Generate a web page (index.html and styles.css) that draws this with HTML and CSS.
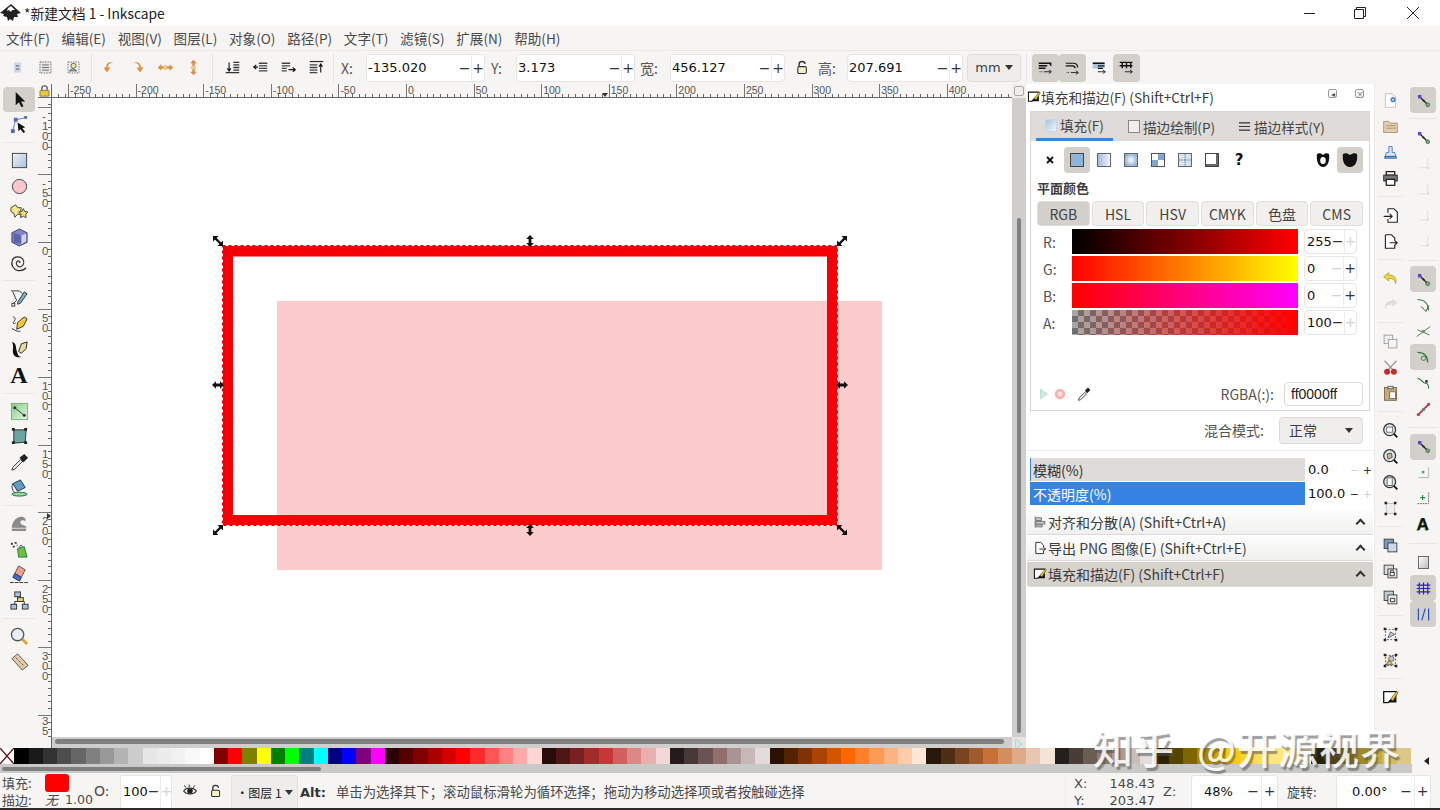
FILE: index.html
```html
<!DOCTYPE html>
<html lang="zh-CN">
<head>
    <meta charset="UTF-8">
    <title>*新建文档 1 - Inkscape</title>
    <link rel="stylesheet" href="styles.css">
</head>
<body>
<!-- icon sheet -->
<svg class="sheet" xmlns="http://www.w3.org/2000/svg">
    <defs>
        <linearGradient id="gBlue" x1="0" y1="0" x2="1" y2="1"><stop offset="0" stop-color="#eef2f8"/><stop offset="1" stop-color="#a9c0de"/></linearGradient>
        <linearGradient id="gGreen" x1="0" y1="0" x2="1" y2="1"><stop offset="0" stop-color="#86cc86"/><stop offset="1" stop-color="#e6f3e2"/></linearGradient>
        <linearGradient id="gPaper" x1="0" y1="0" x2="1" y2="1"><stop offset="0" stop-color="#fff"/><stop offset="1" stop-color="#bbb"/></linearGradient>
    </defs>
    <symbol id="t-select" viewBox="0 0 20 20"><path d="M6 2v14l3.400-3.200 2.600 5.400 2.200-1-2.600-5.200H16z" fill="#111"/></symbol>
    <symbol id="t-node" viewBox="0 0 20 20"><path d="M6 5l10-2M6 5L3 16" stroke="#6a78c0" fill="none"/><path d="M8 8l8 5-3 1 3 4-2 1-3-4-2 2z" fill="#111"/><path d="M4 3h4v4H4zM15 1h3v3h-3zM1 15h4v4H1z" fill="#5566c0"/></symbol>
    <symbol id="t-rect" viewBox="0 0 20 20"><rect x="2.500" y="2.500" width="15" height="15" fill="url(#gBlue)" stroke="#444"/></symbol>
    <symbol id="t-ellipse" viewBox="0 0 20 20"><circle cx="10" cy="10" r="7.500" fill="#f9c6cb" stroke="#444"/></symbol>
    <symbol id="t-star" viewBox="0 0 20 20"><path d="M1 6l5-3 2 3 4 0-1 4 1 3-4 0-3 3-1-4-3-2z" fill="#f5e58e" stroke="#444"/><path d="M14 7l1.500 3 3.500.5-2.500 2.500.5 3.500-3-1.500-3 1.500.5-3.500-2.500-2.500 3.500-.5z" fill="#f2dc6a" stroke="#444"/></symbol>
    <symbol id="t-3d" viewBox="0 0 20 20"><path d="M10 1l8 4v10l-8 4-8-4V5z" fill="#8087c9" stroke="#445"/><path d="M4 5l8 3v8l-8 0z" fill="#5d64ad"/><path d="M12 8l5-2v8l-5 3z" fill="#d2d4ee"/></symbol>
    <symbol id="t-spiral" viewBox="0 0 20 20"><path d="M10 10.500c1.500-1.500-1-3-2.500-1.500-2 2 0 6 3 5.500 4-.5 5-5 3-8-3-3.500-9-3-11 1-2 5 1 10 6 11 4 .5 7-1 8.500-3" fill="none" stroke="#333" stroke-width="1.300"/></symbol>
    <symbol id="t-pencil" viewBox="0 0 20 20"><path d="M1 2h9l3 3M3 3l4 9-4 4" fill="none" stroke="#333"/><path d="M8 14l7-11 3 2-7 10-3 1z" fill="#7ab8b8" stroke="#334"/><rect x="2" y="15" width="3" height="3" fill="#fff" stroke="#333"/></symbol>
    <symbol id="t-pen" viewBox="0 0 20 20"><path d="M3 2c3 0 3 3 1 5s1 3 2 1M2 14c3 2 6 4 9 3" fill="none" stroke="#333"/><path d="M7 15l1-7 7-6 3 2-4 8z" fill="#f2c83a" stroke="#333"/></symbol>
    <symbol id="t-callig" viewBox="0 0 20 20"><path d="M2 2c5 1 4 6 5 9s1 6 5 7c-6 1-9-2-9-6s1-6-1-10z" fill="#111"/><path d="M9 12l3-8 6-2-1 7-5 5z" fill="#e8dc9a" stroke="#222"/></symbol>
    <symbol id="t-gradient" viewBox="0 0 20 20"><rect x="1.500" y="1.500" width="17" height="17" fill="url(#gGreen)" stroke="#7cb07c"/><path d="M5 6l10 8" stroke="#333"/><circle cx="5" cy="6" r="1.600" fill="#333"/><circle cx="15" cy="14" r="1.600" fill="#333"/></symbol>
    <symbol id="t-mesh" viewBox="0 0 20 20"><path d="M4 3l13 0 -1 13-12 1z" fill="#6aa5a0" stroke="#333"/><path d="M2 1h3v3H2zM15 1h3v3h-3zM15 15h3v3h-3zM2 15h3v3H2z" fill="#222"/></symbol>
    <symbol id="t-dropper" viewBox="0 0 20 20"><path d="M3 15l8-8 2 2-8 8-3 1z" fill="#eee" stroke="#333"/><path d="M10 5l5-4 4 4-5 5z" fill="#222"/></symbol>
    <symbol id="t-bucket" viewBox="0 0 20 20"><path d="M3 6l8-4 5 8-8 4z" fill="#5f9fc4" stroke="#234"/><path d="M3 6c-2 4 0 8 3 10" fill="none" stroke="#234"/><ellipse cx="10" cy="17" rx="8" ry="2" fill="#9dd49d" stroke="#264"/></symbol>
    <symbol id="t-tweak" viewBox="0 0 20 20"><path d="M2 13c1-6 6-11 11-10 3 .5 4 3 3 5-1-2-4-2-5 0s2 4 6 5v5H2z" fill="#8b8b8b"/><path d="M2 15h15" stroke="#ddd"/></symbol>
    <symbol id="t-spray" viewBox="0 0 20 20"><path d="M8 9l7-2 3 11-9 0z" fill="#6fbf3f" stroke="#274"/><path d="M10 8c0-3 3-3 3-1" fill="none" stroke="#333"/><path d="M1 3h2v2H1zM5 2h2v2H5zM3 6h2v2H3zM7 5h1v1H7z" fill="#333"/></symbol>
    <symbol id="t-eraser" viewBox="0 0 20 20"><path d="M9 1l7 4-4 8-7-4z" fill="#f0a090" stroke="#555"/><path d="M5 9l7 4-2 4-7-4z" fill="#4a68c8" stroke="#334"/><path d="M0 18.500h20" stroke="#333" stroke-dasharray="4 1"/></symbol>
    <symbol id="t-connector" viewBox="0 0 20 20"><path d="M8 4v5M5 14v-3h10v3" fill="none" stroke="#333"/><rect x="5" y="1" width="6" height="5" fill="#a9c4e0" stroke="#333"/><rect x="8" y="7" width="6" height="4" fill="#f0d860" stroke="#333"/><rect x="1" y="14" width="6" height="5" fill="#a9c4e0" stroke="#333"/><rect x="13" y="14" width="6" height="5" fill="#a9c4e0" stroke="#333"/></symbol>
    <symbol id="t-zoom" viewBox="0 0 20 20"><circle cx="8" cy="8" r="6.500" fill="#e8eef5" stroke="#555" stroke-width="1.400"/><path d="M13 13l5 5" stroke="#d8a830" stroke-width="3"/></symbol>
    <symbol id="t-measure" viewBox="0 0 20 20"><path d="M2 7l6-5 11 12-6 5z" fill="#e8c8a8" stroke="#555"/><path d="M6 6l2 2M9 9l2 2M12 12l2 2" stroke="#555"/></symbol>

    <symbol id="b-layer" viewBox="0 0 20 20"><rect x="6" y="4" width="8" height="12" fill="#cfd8e4"/><path d="M8 7h4v2H8zM8 11h4v2H8z" fill="#7f93ad"/></symbol>
    <symbol id="b-all" viewBox="0 0 20 20"><rect x="3.500" y="3.500" width="13" height="13" fill="#e8e8e8" stroke="#444" stroke-dasharray="1.500 1.500"/><path d="M6 7h8M6 10h8M6 13h8" stroke="#555"/></symbol>
    <symbol id="b-touch" viewBox="0 0 20 20"><rect x="3.500" y="3.500" width="13" height="13" fill="#eee" stroke="#555" stroke-dasharray="1.500 1.500"/><circle cx="10" cy="8" r="3" fill="#e8e6a0" stroke="#555"/><path d="M5 14l4-3 5 3z" fill="#9cc0d8" stroke="#555"/></symbol>
    <symbol id="b-ccw" viewBox="0 0 20 20"><path d="M15 5c-5-1-7 2-7 5h3l-4 6-4-6h3c0-5 4-8 9-5z" fill="#dc9040"/></symbol>
    <symbol id="b-cw" viewBox="0 0 20 20"><path d="M5 5c5-1 7 2 7 5H9l4 6 4-6h-3c0-5-4-8-9-5z" fill="#dc9040"/></symbol>
    <symbol id="b-fliph" viewBox="0 0 20 20"><path d="M1 10l4-4v2.500h10V6l4 4-4 4v-2.500H5V14z" fill="#dc9040"/><rect x="8" y="7" width="4" height="6" fill="#f0c890"/></symbol>
    <symbol id="b-flipv" viewBox="0 0 20 20"><path d="M10 1l4 4h-2.500v10H14l-4 4-4-4h2.500V5H6z" fill="#dc9040"/><rect x="7" y="8" width="6" height="4" fill="#f0c890"/></symbol>
    <symbol id="b-top" viewBox="0 0 20 20"><path d="M11 4h7M11 7h7M11 10h7M11 13h7" stroke="#333" stroke-width="1.500"/><path d="M2 16h16" stroke="#333" stroke-width="1.500"/><path d="M6 4v9M4 11l2 3 2-3" fill="none" stroke="#111" stroke-width="1.300"/></symbol>
    <symbol id="b-raise" viewBox="0 0 20 20"><path d="M8 5h10M8 8h10M8 11h10M8 14h10" stroke="#444" stroke-width="1.500"/><path d="M7 9.500H2M5 7L2 9.500 5 12" fill="none" stroke="#111" stroke-width="1.300"/></symbol>
    <symbol id="b-lower" viewBox="0 0 20 20"><path d="M2 5h10M2 8h10M2 11h6M2 14h6" stroke="#444" stroke-width="1.500"/><path d="M10 12.500h8M15 10l3 2.500-3 2.500" fill="none" stroke="#111" stroke-width="1.300"/></symbol>
    <symbol id="b-bottom" viewBox="0 0 20 20"><path d="M2 3h16" stroke="#333" stroke-width="1.500"/><path d="M2 7h9M2 10h9M2 13h9M2 16h9" stroke="#444" stroke-width="1.500"/><path d="M15 16V7M13 9l2-3 2 3" fill="none" stroke="#111" stroke-width="1.300"/></symbol>
    <symbol id="b-scale" viewBox="0 0 20 20"><path d="M2 5h14v3M2 8h10M2 11h8" fill="none" stroke="#111" stroke-width="1.800"/><path d="M8 15h8M14 13l3 2-3 2" fill="none" stroke="#111"/><path d="M3 15h3" stroke="#111" stroke-dasharray="1 1"/></symbol>
    <symbol id="b-corner" viewBox="0 0 20 20"><path d="M2 5h9c4 0 5 2 5 5M2 8h8c2 0 3 1 3 3" fill="none" stroke="#111" stroke-width="1.400"/><path d="M8 16h8M14 14l3 2-3 2" fill="none" stroke="#111"/><path d="M3 16h3" stroke="#111" stroke-dasharray="1 1"/></symbol>
    <symbol id="b-grad" viewBox="0 0 20 20"><path d="M2 4h14v7H2z" fill="#aac4dc"/><path d="M2 5h14M8 8h8M8 11h6" stroke="#111" stroke-width="1.500"/><path d="M8 15h8M14 13l3 2-3 2" fill="none" stroke="#111"/></symbol>
    <symbol id="b-pat" viewBox="0 0 20 20"><path d="M2 4h15M2 8h15" stroke="#111" stroke-width="1.600"/><path d="M5 4v7M10 4v7M15 4v7" stroke="#111" stroke-width="1.600"/><path d="M8 15h8M14 13l3 2-3 2" fill="none" stroke="#111"/></symbol>
    <symbol id="i-lock" viewBox="0 0 20 20"><path d="M6 9V6c0-4 7-4 7 0" fill="none" stroke="#333" stroke-width="1.600"/><rect x="4.500" y="9" width="10" height="8" rx="1.500" fill="#f5efc8" stroke="#333" stroke-width="1.300"/></symbol>
    <symbol id="i-locked" viewBox="0 0 20 20"><path d="M6 9V5c0-4 8-4 8 0v4" fill="none" stroke="#555" stroke-width="2"/><rect x="3" y="9" width="14" height="9" rx="1" fill="#e8c838" stroke="#554"/></symbol>
    <symbol id="i-eye" viewBox="0 0 20 20"><path d="M2 10c4-5 12-5 16 0-4 5-12 5-16 0z" fill="#fff" stroke="#222" stroke-width="1.300"/><circle cx="10" cy="10" r="3.500" fill="#222"/><path d="M5 6L3 3M9 5V2M14 6l2-3" stroke="#222" stroke-width="1.200"/></symbol>

    <symbol id="p-none" viewBox="0 0 20 20"><path d="M7 7l6 6M13 7l-6 6" stroke="#111" stroke-width="1.800"/></symbol>
    <symbol id="p-flat" viewBox="0 0 20 20"><rect x="3.500" y="3.500" width="13" height="13" fill="#8db4da" stroke="#444"/></symbol>
    <symbol id="p-linear" viewBox="0 0 20 20"><defs><linearGradient id="gL"><stop offset="0" stop-color="#9fb9dc"/><stop offset="1" stop-color="#f4f6fa"/></linearGradient></defs><rect x="3.500" y="3.500" width="13" height="13" fill="url(#gL)" stroke="#666"/></symbol>
    <symbol id="p-radial" viewBox="0 0 20 20"><defs><radialGradient id="gR"><stop offset="0" stop-color="#fff"/><stop offset="1" stop-color="#90b0d8"/></radialGradient></defs><rect x="3.500" y="3.500" width="13" height="13" fill="url(#gR)" stroke="#666"/></symbol>
    <symbol id="p-pattern" viewBox="0 0 20 20"><rect x="3.500" y="3.500" width="13" height="13" fill="#fff" stroke="#555"/><path d="M10 4h6v6h-6zM4 10h6v6H4z" fill="#7fa6cf"/><path d="M4 4h6v6H4z" fill="#fff"/></symbol>
    <symbol id="p-mesh" viewBox="0 0 20 20"><rect x="3.500" y="3.500" width="13" height="13" fill="#d5e2ef" stroke="#666"/><path d="M10 4v12M4 10h12" stroke="#777" stroke-dasharray="1.500 1"/></symbol>
    <symbol id="p-swatch" viewBox="0 0 20 20"><rect x="3.500" y="3.500" width="13" height="13" fill="#fff" stroke="#444"/><path d="M14 4h2v12H4v-2h10z" fill="#666"/></symbol>
    <symbol id="p-odd" viewBox="0 0 20 20"><path d="M4 4c2-1 4-1 6 1 2-2 4-2 6-1 1 6-1 13-6 13S3 10 4 4z" fill="#111"/><ellipse cx="10" cy="10.500" rx="2.800" ry="3.500" fill="#fff"/></symbol>
    <symbol id="p-nonzero" viewBox="0 0 20 20"><path d="M3 4c2-1 4-1 7 1 3-2 5-2 7-1 1 6-1 13-7 13S2 10 3 4z" fill="#111"/></symbol>
    <symbol id="p-play" viewBox="0 0 20 20"><path d="M5 3l10 7-10 7z" fill="#cfe9e6" stroke="#a8d4c4"/></symbol>
    <symbol id="p-stop" viewBox="0 0 20 20"><circle cx="10" cy="10" r="7.500" fill="#f4b4b4"/><circle cx="10" cy="10" r="3.500" fill="#fbdcdc"/></symbol>
    <symbol id="p-dropper" viewBox="0 0 20 20"><path d="M4 15l7-7 2 2-7 7-3 1z" fill="#fff" stroke="#222"/><path d="M11 6l4-4 3 3-4 4z" fill="#222"/></symbol>
    <symbol id="d-fill" viewBox="0 0 20 20"><path d="M2 3h15v3L7 16H2z" fill="#fff" stroke="#111" stroke-width="1.500"/><path d="M7 16L17 6v10z" fill="#111"/><path d="M10 12l7-9 2 1-6 10z" fill="#e8c030" stroke="#333" stroke-width=".6"/></symbol>
    <symbol id="d-align" viewBox="0 0 20 20"><path d="M3 2v16" stroke="#666"/><rect x="4" y="4" width="8" height="4" fill="#c8c8c8" stroke="#555"/><rect x="4" y="9" width="13" height="4" fill="#c8c8c8" stroke="#555"/><rect x="4" y="14" width="9" height="3" fill="#c8c8c8" stroke="#555"/></symbol>
    <symbol id="d-export" viewBox="0 0 20 20"><path d="M4 2h7l4 4v3M15 14v4H4V2" fill="#fff" stroke="#222" stroke-width="1.300"/><path d="M9 11.500h9M15 9l3 2.500-3 2.500" fill="none" stroke="#222" stroke-width="1.300"/></symbol>
    <symbol id="d-import" viewBox="0 0 20 20"><path d="M7 7V2h7l4 4v12H7v-4" fill="#fff" stroke="#222" stroke-width="1.300"/><path d="M2 11h10M9 8l3 3-3 3" fill="none" stroke="#222" stroke-width="1.300"/></symbol>

    <symbol id="c-new" viewBox="0 0 20 20"><path d="M4 2h8l4 4v12H4z" fill="#fff" stroke="#bbb"/><circle cx="13" cy="9" r="3" fill="#4a86c8"/><circle cx="13" cy="9" r="1" fill="#fff"/></symbol>
    <symbol id="c-open" viewBox="0 0 20 20"><path d="M2 4h6l2 2h8v11H2z" fill="#e3cfae" stroke="#a08a70"/><path d="M5 9h11M5 12h11" stroke="#a08a70"/></symbol>
    <symbol id="c-save" viewBox="0 0 20 20"><path d="M8 3h4v7h3l2 7H3l2-7h3z" fill="#d4e2f2" stroke="#4a78b0"/><path d="M3 15h14" stroke="#3a6aa8" stroke-width="2"/></symbol>
    <symbol id="c-print" viewBox="0 0 20 20"><path d="M5 2h10v4H5z" fill="#fff" stroke="#222" stroke-width="1.500"/><rect x="2" y="6" width="16" height="7" fill="#777" stroke="#222"/><rect x="5" y="11" width="10" height="7" fill="#fff" stroke="#222" stroke-width="1.500"/></symbol>
    <symbol id="c-undo" viewBox="0 0 20 20"><path d="M8 3L2 8l6 5v-3c4 0 7 1 8 6 2-7-2-10-8-10z" fill="#ecd44c" stroke="#a89020" stroke-width=".8"/></symbol>
    <symbol id="c-redo" viewBox="0 0 20 20"><path d="M12 3l6 5-6 5v-3c-4 0-7 1-8 6-2-7 2-10 8-10z" fill="#ddd"/></symbol>
    <symbol id="c-dup" viewBox="0 0 20 20"><rect x="2.500" y="2.500" width="10" height="10" fill="#f0f0f0" stroke="#999"/><rect x="7.500" y="7.500" width="10" height="10" fill="#f4f4f4" stroke="#999"/></symbol>
    <symbol id="c-cut" viewBox="0 0 20 20"><path d="M3 2l10 11M17 2L7 13" stroke="#999" stroke-width="1.500"/><circle cx="6" cy="15" r="3.500" fill="#c82828"/><circle cx="14" cy="15" r="3.500" fill="#c82828"/></symbol>
    <symbol id="c-paste" viewBox="0 0 20 20"><rect x="3" y="3" width="14" height="15" fill="#c8a878" stroke="#7a6040"/><rect x="7" y="1.500" width="6" height="3" fill="#ddd" stroke="#555"/><rect x="9" y="8" width="7" height="8" fill="#fff" stroke="#666"/></symbol>
    <symbol id="z-sel" viewBox="0 0 20 20"><circle cx="9" cy="9" r="7" fill="#dfe6ea" stroke="#333" stroke-width="1.500"/><rect x="5.500" y="6" width="7" height="6" fill="#fff" stroke="#666"/><path d="M14 14l4 4" stroke="#111" stroke-width="2.200"/></symbol>
    <symbol id="z-draw" viewBox="0 0 20 20"><circle cx="9" cy="9" r="7" fill="#dfe6ea" stroke="#333" stroke-width="1.500"/><path d="M6 7l5-1 1 5-5 2z" fill="#c8b890" stroke="#444"/><path d="M14 14l4 4" stroke="#111" stroke-width="2.200"/></symbol>
    <symbol id="z-page" viewBox="0 0 20 20"><circle cx="9" cy="9" r="7" fill="#dfe6ea" stroke="#333" stroke-width="1.500"/><rect x="6" y="4.500" width="6" height="9" fill="#fff" stroke="#555"/><path d="M14 14l4 4" stroke="#111" stroke-width="2.200"/></symbol>
    <symbol id="z-fit" viewBox="0 0 20 20"><rect x="5" y="4" width="10" height="12" fill="#eee" stroke="#bbb"/><path d="M3 2h3v3H3zM14 2h3v3h-3zM3 15h3v3H3zM14 15h3v3h-3z" fill="#222"/></symbol>
    <symbol id="o-clone" viewBox="0 0 20 20"><rect x="2.500" y="2.500" width="11" height="11" fill="#7a9cc4" stroke="#333"/><rect x="7" y="7" width="10.500" height="10.500" fill="#c9daee" stroke="#333"/></symbol>
    <symbol id="o-group" viewBox="0 0 20 20"><rect x="2.500" y="2.500" width="11" height="11" fill="#ddd" stroke="#333"/><rect x="7" y="7" width="10.500" height="10.500" fill="#eee" stroke="#333"/><path d="M10 11V9.500c0-2 3.500-2 3.500 0V11M9.500 11h5v4h-5z" fill="none" stroke="#222"/></symbol>
    <symbol id="o-ungroup" viewBox="0 0 20 20"><rect x="2.500" y="2.500" width="11" height="11" fill="#bcc" stroke="#333"/><rect x="7" y="7" width="10.500" height="10.500" fill="#eee" stroke="#333"/><path d="M10 15v-4h5v4z" fill="none" stroke="#222"/></symbol>
    <symbol id="o-g1" viewBox="0 0 20 20"><rect x="4" y="4" width="12" height="12" fill="none" stroke="#444" stroke-dasharray="2 2"/><path d="M7 14l3-7 5 3z" fill="#bcd" stroke="#555"/><path d="M2 2h3v3H2zM15 2h3v3h-3zM2 15h3v3H2zM15 15h3v3h-3z" fill="#222"/></symbol>
    <symbol id="o-g2" viewBox="0 0 20 20"><rect x="4" y="4" width="12" height="12" fill="#f0e8c8" stroke="#444" stroke-dasharray="2 2"/><circle cx="11" cy="8" r="3" fill="#bcd" stroke="#555"/><path d="M5 15l3-5 5 5z" fill="#e0c860" stroke="#555"/><path d="M2 2h3v3H2zM15 2h3v3h-3zM2 15h3v3H2zM15 15h3v3h-3z" fill="#222"/></symbol>

    <symbol id="s-node" viewBox="0 0 20 20"><path d="M5 5l10 10" stroke="#222" stroke-width="1.400"/><rect x="3.500" y="3.500" width="4" height="4" fill="#5a48c0"/><circle cx="15" cy="15" r="2.300" fill="#6ab46a" stroke="#333" stroke-width=".6"/><circle cx="10" cy="10" r="1.300" fill="#222"/></symbol>
    <symbol id="s-corner" viewBox="0 0 20 20"><path d="M15 4v11H5" fill="none" stroke="#ddd"/><circle cx="15" cy="15" r="1.500" fill="#ddd"/></symbol>
    <symbol id="s-path" viewBox="0 0 20 20"><path d="M3 3c8 0 13 5 13 13" fill="none" stroke="#2a8a3a" stroke-width="1.300"/><path d="M7 11l6 6 3-7" fill="none" stroke="#333"/></symbol>
    <symbol id="s-cross" viewBox="0 0 20 20"><path d="M2 16L18 4M3 8l14 6" stroke="#555"/><circle cx="10" cy="10" r="2" fill="#6a9a6a"/></symbol>
    <symbol id="s-smooth" viewBox="0 0 20 20"><path d="M3 4c8 0 12 4 12 12" fill="none" stroke="#2a7a3a" stroke-width="1.300"/><circle cx="10" cy="11" r="2.500" fill="none" stroke="#2a7a3a"/></symbol>
    <symbol id="s-mid" viewBox="0 0 20 20"><path d="M3 4c5 0 5 6 10 6 2 0 3 3 3 6" fill="none" stroke="#2a7a3a" stroke-width="1.300"/><path d="M12 6h3v3h-3z" fill="#333"/></symbol>
    <symbol id="s-red" viewBox="0 0 20 20"><path d="M4 16L16 4" stroke="#b03030" stroke-width="2"/><circle cx="4" cy="16" r="2" fill="#c04848"/><circle cx="10" cy="10" r="2" fill="#708070"/><circle cx="16" cy="4" r="2" fill="#c04848"/></symbol>
    <symbol id="s-center" viewBox="0 0 20 20"><path d="M16 4v12H4" fill="none" stroke="#aaa"/><rect x="8" y="8" width="3" height="3" fill="#5aa070"/></symbol>
    <symbol id="s-plus" viewBox="0 0 20 20"><path d="M16 3v13H3" fill="none" stroke="#555" stroke-dasharray="2 1"/><path d="M6 9h6M9 6v6" stroke="#2a8a3a" stroke-width="1.300"/></symbol>
    <symbol id="s-page" viewBox="0 0 20 20"><rect x="4" y="3" width="12" height="14" fill="url(#gPaper)" stroke="#555"/></symbol>
    <symbol id="s-grid" viewBox="0 0 20 20"><path d="M2 6h16M2 10h16M2 14h16M5 3v14M10 3v14M15 3v14" stroke="#2a20c0" stroke-width="1.300"/></symbol>
    <symbol id="s-guide" viewBox="0 0 20 20"><path d="M4 3v14M16 3v14M8 17l4-14" stroke="#2a50c0" stroke-width="1.400"/></symbol>
</svg>

<div class="titlebar">
    <svg class="logo" viewBox="0 0 22 20"><path d="M11 1l10 9-4 1 1 3-4 0-1 4-3-2-2 2-1-4-4-1 1-2-4-1z" fill="#222"/><path d="M8 5l3-2 4 4-3 0-1 2-2-2-2 1z" fill="#fff"/></svg>
    <span class="title">*新建文档 1 - Inkscape</span>
    <div class="winctl">
        <svg viewBox="0 0 14 14"><path d="M1 7.500h11" stroke="#222" fill="none"/></svg>
        <svg viewBox="0 0 14 14"><path d="M1.500 3.500h9v9h-9zM3.500 3.500v-2h9v9h-2" stroke="#222" fill="none"/></svg>
        <svg class="win-close" viewBox="0 0 14 14"><path d="M1 1l12 12M13 1L1 13" stroke="#222" fill="none"/></svg>
    </div>
</div>

<div class="menubar">
    <span>文件(F)</span><span>编辑(E)</span><span>视图(V)</span><span>图层(L)</span><span>对象(O)</span><span>路径(P)</span><span>文字(T)</span><span>滤镜(S)</span><span>扩展(N)</span><span>帮助(H)</span>
</div>

<div class="toolbar">
    <span class="tb"><svg class="ic"><use href="#b-layer"/></svg></span>
    <span class="tb"><svg class="ic"><use href="#b-all"/></svg></span>
    <span class="tb"><svg class="ic"><use href="#b-touch"/></svg></span>
    <i class="vsep sep-a"></i>
    <span class="tb"><svg class="ic"><use href="#b-ccw"/></svg></span>
    <span class="tb"><svg class="ic"><use href="#b-cw"/></svg></span>
    <span class="tb"><svg class="ic"><use href="#b-fliph"/></svg></span>
    <span class="tb"><svg class="ic"><use href="#b-flipv"/></svg></span>
    <i class="vsep sep-b"></i>
    <span class="tb"><svg class="ic"><use href="#b-top"/></svg></span>
    <span class="tb"><svg class="ic"><use href="#b-raise"/></svg></span>
    <span class="tb"><svg class="ic"><use href="#b-lower"/></svg></span>
    <span class="tb"><svg class="ic"><use href="#b-bottom"/></svg></span>
    <i class="vsep sep-d"></i>
    <label class="coord coord-x">X:</label>
    <div class="spin w-119"><span class="val">-135.020</span><b>−</b><b>+</b></div>
    <label class="coord coord-y">Y:</label>
    <div class="spin w-119"><span class="val">3.173</span><b>−</b><b>+</b></div>
    <label class="coord coord-w">宽:</label>
    <div class="spin w-115"><span class="val">456.127</span><b>−</b><b>+</b></div>
    <span class="tb tb-lock"><svg class="ic"><use href="#i-lock"/></svg></span>
    <label class="coord coord-h">高:</label>
    <div class="spin w-116"><span class="val">207.691</span><b>−</b><b>+</b></div>
    <div class="unit">mm<i class="caret"></i></div>
    <i class="vsep sep-c"></i>
    <span class="tb tb-snap on"><svg class="ic"><use href="#b-scale"/></svg></span>
    <span class="tb tb-snap on"><svg class="ic"><use href="#b-corner"/></svg></span>
    <span class="tb tb-snap"><svg class="ic"><use href="#b-grad"/></svg></span>
    <span class="tb tb-snap on"><svg class="ic"><use href="#b-pat"/></svg></span>
</div>

<div class="workspace">
    <div class="toolbox">
        <span class="tool on"><svg class="ic"><use href="#t-select"/></svg></span>
        <span class="tool"><svg class="ic"><use href="#t-node"/></svg></span>
        <hr>
        <span class="tool"><svg class="ic"><use href="#t-rect"/></svg></span>
        <span class="tool"><svg class="ic"><use href="#t-ellipse"/></svg></span>
        <span class="tool"><svg class="ic"><use href="#t-star"/></svg></span>
        <span class="tool"><svg class="ic"><use href="#t-3d"/></svg></span>
        <span class="tool"><svg class="ic"><use href="#t-spiral"/></svg></span>
        <hr>
        <span class="tool"><svg class="ic"><use href="#t-pencil"/></svg></span>
        <span class="tool"><svg class="ic"><use href="#t-pen"/></svg></span>
        <span class="tool"><svg class="ic"><use href="#t-callig"/></svg></span>
        <span class="tool tool-text">A</span>
        <hr>
        <span class="tool"><svg class="ic"><use href="#t-gradient"/></svg></span>
        <span class="tool"><svg class="ic"><use href="#t-mesh"/></svg></span>
        <span class="tool"><svg class="ic"><use href="#t-dropper"/></svg></span>
        <span class="tool"><svg class="ic"><use href="#t-bucket"/></svg></span>
        <hr>
        <span class="tool"><svg class="ic"><use href="#t-tweak"/></svg></span>
        <span class="tool"><svg class="ic"><use href="#t-spray"/></svg></span>
        <span class="tool"><svg class="ic"><use href="#t-eraser"/></svg></span>
        <span class="tool"><svg class="ic"><use href="#t-connector"/></svg></span>
        <hr>
        <span class="tool"><svg class="ic"><use href="#t-zoom"/></svg></span>
        <span class="tool"><svg class="ic"><use href="#t-measure"/></svg></span>
    </div>

    <div class="canvas-area">
        <div class="ruler-corner"><svg class="ic-sm"><use href="#i-locked"/></svg></div>
        <div class="hruler">
            <div class="hcell hcell-first"></div>
            <div class="hcell"><span>-250</span></div>
            <div class="hcell"><span>-200</span></div>
            <div class="hcell"><span>-150</span></div>
            <div class="hcell"><span>-100</span></div>
            <div class="hcell"><span>-50</span></div>
            <div class="hcell"><span>0</span></div>
            <div class="hcell"><span>50</span></div>
            <div class="hcell"><span>100</span></div>
            <div class="hcell"><span>150</span></div>
            <div class="hcell"><span>200</span></div>
            <div class="hcell"><span>250</span></div>
            <div class="hcell"><span>300</span></div>
            <div class="hcell"><span>350</span></div>
            <div class="hcell"><span>400</span></div>
            <i class="ruler-mark-h"></i>
        </div>
        <div class="cms-btn"><i></i></div>
        <div class="vruler">
            <div class="vcell vcell-first"></div>
            <div class="vcell"><span>-100</span></div>
            <div class="vcell"><span>-50</span></div>
            <div class="vcell"><span>0</span></div>
            <div class="vcell"><span>50</span></div>
            <div class="vcell"><span>100</span></div>
            <div class="vcell"><span>150</span></div>
            <div class="vcell"><span>200</span></div>
            <div class="vcell"><span>250</span></div>
            <div class="vcell"><span>300</span></div>
            <div class="vcell vcell-last"><span>35</span></div>
            <i class="ruler-mark-v"></i>
        </div>
        <div class="canvas">
            <svg viewBox="52 98 960 639" width="960" height="639">
                <defs>
                    <g id="h-diag"><path d="M-3-3L3 3" stroke="#111" stroke-width="2.400"/><path d="M-5-5h5.500L-5 .5zM5 5h-5.500L5-.5z" fill="#111"/></g>
                    <path id="h-vert" d="M0-6L3.800-2H1.400v4h2.400L0 6l-3.800-4h2.400v-4h-2.400z" fill="#111"/>
                </defs>
                <rect x="277" y="301" width="605" height="269" fill="#fccbcb"/>
                <rect x="227.500" y="251" width="605" height="269.500" fill="none" stroke="#f70008" stroke-width="11"/>
                <rect x="222.500" y="245.500" width="615" height="280" fill="none" stroke="#fff" stroke-width="1"/>
                <rect x="222.500" y="245.500" width="615" height="280" fill="none" stroke="#d00" stroke-width="1" stroke-dasharray="3 3"/>
                <use href="#h-diag" x="218" y="241"/>
                <use href="#h-diag" x="842" y="530"/>
                <use href="#h-diag" transform="translate(842 241) rotate(90)"/>
                <use href="#h-diag" transform="translate(218 530) rotate(90)"/>
                <use href="#h-vert" x="530" y="241"/>
                <use href="#h-vert" x="530" y="530"/>
                <use href="#h-vert" transform="translate(218 385) rotate(90)"/>
                <use href="#h-vert" transform="translate(842 385) rotate(90)"/>
            </svg>
        </div>
        <div class="vscroll"><i></i></div>
        <div class="hscroll-spacer"></div>
        <div class="hscroll"><i></i></div>
        <div class="scroll-corner"><svg class="ic-sm"><use href="#p-play"/></svg></div>
    </div>

    <div class="dock">
        <div class="dock-head">
            <svg class="ic-dock"><use href="#d-fill"/></svg>
            <span>填充和描边(F) (Shift+Ctrl+F)</span>
            <i class="dock-btn dock-btn-a">◂</i>
            <i class="dock-btn dock-btn-b">×</i>
        </div>
        <div class="notebook">
            <div class="tabs">
                <div class="tab tab-fill active"><i class="tab-swatch blue"></i>填充(F)</div>
                <div class="tab tab-paint"><i class="tab-swatch"></i>描边绘制(P)</div>
                <div class="tab tab-style"><svg class="ic-tab" viewBox="0 0 14 14"><path d="M1 3h12M1 7h12M1 11h12" stroke="#333" stroke-width="1.300"/></svg>描边样式(Y)</div>
            </div>
            <div class="paint-row">
                <span class="paint"><svg class="ic"><use href="#p-none"/></svg></span>
                <span class="paint on"><svg class="ic"><use href="#p-flat"/></svg></span>
                <span class="paint"><svg class="ic"><use href="#p-linear"/></svg></span>
                <span class="paint"><svg class="ic"><use href="#p-radial"/></svg></span>
                <span class="paint"><svg class="ic"><use href="#p-pattern"/></svg></span>
                <span class="paint"><svg class="ic"><use href="#p-mesh"/></svg></span>
                <span class="paint"><svg class="ic"><use href="#p-swatch"/></svg></span>
                <span class="paint paint-q">?</span>
                <span class="paint paint-rule"><svg class="ic"><use href="#p-odd"/></svg></span>
                <span class="paint on"><svg class="ic"><use href="#p-nonzero"/></svg></span>
            </div>
            <div class="flat-title">平面颜色</div>
            <div class="modes">
                <span class="on">RGB</span><span>HSL</span><span>HSV</span><span>CMYK</span><span>色盘</span><span>CMS</span>
            </div>
            <div class="sliders">
                <div class="slider-row"><label>R:</label><div class="slider s-r"></div><div class="spin spin-color"><span class="val">255</span><b>−</b><b class="off">+</b></div></div>
                <div class="slider-row"><label>G:</label><div class="slider s-g"></div><div class="spin spin-color"><span class="val">0</span><b class="off">−</b><b>+</b></div></div>
                <div class="slider-row"><label>B:</label><div class="slider s-b"></div><div class="spin spin-color"><span class="val">0</span><b class="off">−</b><b>+</b></div></div>
                <div class="slider-row"><label>A:</label><div class="slider s-a"></div><div class="spin spin-color"><span class="val">100</span><b>−</b><b class="off">+</b></div></div>
            </div>
            <div class="rgba-row">
                <svg class="ic-sm"><use href="#p-play"/></svg>
                <svg class="ic-sm"><use href="#p-stop"/></svg>
                <svg class="ic-drop"><use href="#p-dropper"/></svg>
                <label>RGBA(:):</label>
                <div class="rgba-input">ff0000ff</div>
            </div>
        </div>
        <div class="blend-row">
            <label>混合模式:</label>
            <div class="combo">正常<i class="caret"></i></div>
        </div>
        <div class="bars">
            <div class="bar-row">
                <div class="bar">模糊(%)</div>
                <span class="bar-val">0.0</span><b class="off">−</b><b>+</b>
            </div>
            <div class="bar-row">
                <div class="bar active">不透明度(%)</div>
                <span class="bar-val">100.0</span><b>−</b><b class="off">+</b>
            </div>
        </div>
        <div class="expander"><svg class="ic-dock"><use href="#d-align"/></svg><span>对齐和分散(A) (Shift+Ctrl+A)</span><i class="chev"></i></div>
        <div class="expander"><svg class="ic-dock"><use href="#d-export"/></svg><span>导出 PNG 图像(E) (Shift+Ctrl+E)</span><i class="chev"></i></div>
        <div class="expander active"><svg class="ic-dock"><use href="#d-fill"/></svg><span>填充和描边(F) (Shift+Ctrl+F)</span><i class="chev"></i></div>
    </div>

    <div class="cmdbar">
        <span class="cmd"><svg class="ic"><use href="#c-new"/></svg></span>
        <span class="cmd"><svg class="ic"><use href="#c-open"/></svg></span>
        <span class="cmd"><svg class="ic"><use href="#c-save"/></svg></span>
        <span class="cmd"><svg class="ic"><use href="#c-print"/></svg></span>
        <hr>
        <span class="cmd"><svg class="ic"><use href="#d-import"/></svg></span>
        <span class="cmd"><svg class="ic"><use href="#d-export"/></svg></span>
        <hr>
        <span class="cmd"><svg class="ic"><use href="#c-undo"/></svg></span>
        <span class="cmd"><svg class="ic"><use href="#c-redo"/></svg></span>
        <hr>
        <span class="cmd"><svg class="ic"><use href="#c-dup"/></svg></span>
        <span class="cmd"><svg class="ic"><use href="#c-cut"/></svg></span>
        <span class="cmd"><svg class="ic"><use href="#c-paste"/></svg></span>
        <hr>
        <span class="cmd"><svg class="ic"><use href="#z-sel"/></svg></span>
        <span class="cmd"><svg class="ic"><use href="#z-draw"/></svg></span>
        <span class="cmd"><svg class="ic"><use href="#z-page"/></svg></span>
        <span class="cmd"><svg class="ic"><use href="#z-fit"/></svg></span>
        <hr>
        <span class="cmd"><svg class="ic"><use href="#o-clone"/></svg></span>
        <span class="cmd"><svg class="ic"><use href="#o-group"/></svg></span>
        <span class="cmd"><svg class="ic"><use href="#o-ungroup"/></svg></span>
        <hr>
        <span class="cmd"><svg class="ic"><use href="#o-g1"/></svg></span>
        <span class="cmd"><svg class="ic"><use href="#o-g2"/></svg></span>
        <hr>
        <span class="cmd"><svg class="ic"><use href="#d-fill"/></svg></span>
    </div>

    <div class="snapbar">
        <span class="snap on"><svg class="ic"><use href="#s-node"/></svg></span>
        <hr>
        <span class="snap"><svg class="ic"><use href="#s-node"/></svg></span>
        <span class="snap"><svg class="ic"><use href="#s-corner"/></svg></span>
        <span class="snap"><svg class="ic"><use href="#s-corner"/></svg></span>
        <span class="snap"><svg class="ic"><use href="#s-corner"/></svg></span>
        <span class="snap"><svg class="ic"><use href="#s-corner"/></svg></span>
        <hr>
        <span class="snap on"><svg class="ic"><use href="#s-node"/></svg></span>
        <span class="snap"><svg class="ic"><use href="#s-path"/></svg></span>
        <span class="snap"><svg class="ic"><use href="#s-cross"/></svg></span>
        <span class="snap on"><svg class="ic"><use href="#s-smooth"/></svg></span>
        <span class="snap"><svg class="ic"><use href="#s-mid"/></svg></span>
        <span class="snap"><svg class="ic"><use href="#s-red"/></svg></span>
        <hr>
        <span class="snap on"><svg class="ic"><use href="#s-node"/></svg></span>
        <span class="snap"><svg class="ic"><use href="#s-center"/></svg></span>
        <span class="snap"><svg class="ic"><use href="#s-plus"/></svg></span>
        <span class="snap snap-text">A</span>
        <hr>
        <span class="snap"><svg class="ic"><use href="#s-page"/></svg></span>
        <span class="snap on"><svg class="ic"><use href="#s-grid"/></svg></span>
        <span class="snap on"><svg class="ic"><use href="#s-guide"/></svg></span>
    </div>
</div>

<div class="palette" id="palette">
    <div class="swatch-none"><svg viewBox="0 0 14 16"><path d="M0 0l14 16M14 0L0 16" stroke="#611" stroke-width="1.300"/></svg></div>
    <i class="palette-arrow"></i>
</div>
<div class="palette-scroll"><i></i></div>

<div class="statusbar">
    <div class="fillstroke">
        <div class="fs-row"><span class="fs-label">填充:</span><i class="fs-swatch"></i></div>
        <div class="fs-row fs-row-b"><span class="fs-label">描边:</span><em>无</em><span class="fs-width">1.00</span></div>
    </div>
    <label class="opacity-label">O:</label>
    <div class="spin spin-opacity"><span class="val">100</span><b>−</b><b class="off">+</b></div>
    <span class="st-ic st-eye"><svg class="ic"><use href="#i-eye"/></svg></span>
    <span class="st-ic"><svg class="ic"><use href="#i-lock"/></svg></span>
    <div class="layer">•图层 1<i class="caret"></i></div>
    <div class="message"><b>Alt:</b>单击为选择其下&#xFF1B;滚动鼠标滑轮为循环选择&#xFF1B;拖动为移动选择项或者按触碰选择</div>
    <div class="pos">
        <div><span>X:</span><span>148.43</span></div>
        <div><span>Y:</span><span>203.47</span></div>
    </div>
    <label class="z-label">Z:</label>
    <div class="spin spin-zoom"><span class="val">48%</span><b>−</b><b>+</b></div>
    <label class="rot-label">旋转:</label>
    <div class="spin spin-rot"><span class="val">0.00°</span><b>−</b><b>+</b></div>
</div>
<div class="bottom-edge"></div>

<div class="watermark">知乎 @开源视界</div>

<script src="palette.js"></script>
</body>
</html>
```
FILE: styles.css
```css
* {
    box-sizing: border-box;
}
html, body {
    margin: 0;
    height: 100%;
}
body {
    position: relative;
    width: 1440px;
    height: 810px;
    overflow: hidden;
    display: flex;
    flex-direction: column;
    background: #f6f5f4;
    color: #3d3d3d;
    font-family: "Noto Sans CJK SC", "Noto Sans", sans-serif;
    font-size: 14px;
}
.sheet {
    position: absolute;
    width: 0;
    height: 0;
}
.ic {
    width: 20px;
    height: 20px;
    display: block;
}
.ic-sm {
    width: 14px;
    height: 14px;
    display: block;
}
.ic-dock {
    width: 14px;
    height: 14px;
    flex: none;
}
hr {
    border: 0;
    border-top: 1px solid #e4e2e0;
    margin: 0;
}

/* title + menu */
.titlebar {
    height: 26px;
    background: #fff;
    display: flex;
    align-items: center;
    color: #222;
}
.logo {
    width: 22px;
    height: 20px;
    margin: 0 2px 0 0;
}
.title {
    line-height: 26px;
    font-size: 13.8px;
}
.winctl {
    margin-left: auto;
    display: flex;
    gap: 36px;
    padding-right: 20px;
}
.winctl svg {
    width: 14px;
    height: 14px;
}
.winctl .win-close {
    margin-left: 3px;
}
.menubar {
    height: 24px;
    display: flex;
    align-items: center;
    gap: 11.7px;
    padding-left: 6px;
    font-size: 13.6px;
    color: #4a4a4a;
}

/* top toolbar */
.toolbar {
    height: 34px;
    display: flex;
    align-items: center;
    padding-left: 3px;
    border-top: 1px solid #ebe9e7;
}
.tb {
    width: 28px;
    height: 28px;
    display: flex;
    align-items: center;
    justify-content: center;
    flex: none;
}
.tb .ic {
    width: 17px;
    height: 17px;
}
.vsep {
    flex: none;
    width: 1px;
    height: 28px;
    background: #e6e4e2;
}
.sep-a {
    margin: 0 3px 0 4px;
}
.sep-b {
    margin: 0 5px;
}
.sep-c {
    margin: 0 5px;
}
.sep-d {
    margin: 0 0 0 3px;
}
.coord {
    flex: none;
    color: #555;
}
.coord-x { width: 32px; padding-left: 7px; }
.coord-y { width: 31px; padding-left: 6px; }
.coord-w { width: 35px; padding-left: 5px; }
.coord-h { width: 29px; padding-left: 2px; margin-right: 2px; }
.tb-lock {
    margin-left: 3px;
}
.spin {
    display: flex;
    align-items: stretch;
    flex: none;
    height: 28px;
    background: #fff;
    border: 1px solid #e8e6e3;
    border-radius: 4px;
    font-family: "DejaVu Sans", sans-serif;
    font-size: 13px;
    color: #111;
}
.spin .val {
    flex: 1;
    padding-left: 1px;
    line-height: 26px;
    white-space: nowrap;
}
.spin b, .bar-row b {
    width: 13px;
    font-weight: 400;
    font-size: 14px;
    text-align: center;
    line-height: 26px;
    color: #333;
}
.spin b + b {
    border-left: 1px solid #eeeceb;
}
b.off {
    color: #d4d4d4;
}
.w-119 { width: 119px; }
.w-115 { width: 115px; }
.w-116 { width: 116px; }
.unit {
    flex: none;
    width: 54px;
    height: 28px;
    margin-left: 4px;
    display: flex;
    align-items: center;
    justify-content: center;
    gap: 4px;
    background: #efedeb;
    border: 1px solid #e0dedb;
    border-radius: 4px;
    font-family: "DejaVu Sans", sans-serif;
    font-size: 13px;
}
.caret {
    display: inline-block;
    width: 0;
    height: 0;
    border-left: 4px solid transparent;
    border-right: 4px solid transparent;
    border-top: 5px solid #333;
}
.tb-snap {
    width: 27px;
    height: 28px;
    border-radius: 4px;
}
.tb.on {
    background: #d3cfcb;
}

/* main area */
.workspace {
    height: 664px;
    display: flex;
}
.toolbox {
    width: 38px;
    flex: none;
    padding-top: 2.5px;
}
.tool {
    height: 25.5px;
    margin: 0 3px;
    display: flex;
    align-items: center;
    justify-content: center;
    border-radius: 4px;
}
.tool .ic {
    width: 19px;
    height: 19px;
}
.tool.on {
    background: #d3cfcb;
}
.toolbox hr {
    margin: 4.75px 3px;
    border-color: #e8e6e4;
}
.tool-text {
    font-family: "Liberation Serif", serif;
    font-weight: 700;
    font-size: 24px;
    color: #111;
}
.snap-text {
    font-family: "Liberation Sans", sans-serif;
    font-weight: 700;
    font-size: 17px;
    color: #111;
    text-shadow: -1px 1px 0 #6ab46a;
}
.canvas-area {
    width: 988px;
    flex: none;
    display: grid;
    grid-template-columns: 14px 960px 14px;
    grid-template-rows: 14px 639px 11px;
}
.ruler-corner {
    display: flex;
    justify-content: center;
    align-items: flex-start;
    padding-top: 0;
    border-right: 1px solid #666;
    border-bottom: 1px solid #666;
}
.hruler {
    position: relative;
    display: flex;
    overflow: hidden;
    border-bottom: 1px solid #666;
}
.hcell {
    flex: none;
    width: 67.6px;
    height: 13px;
    border-left: 1px solid #777;
    background:
        repeating-linear-gradient(90deg, #666 0 1px, transparent 1px 6.76px) 5.8px 100%/100% 3px no-repeat;
    font-family: "Liberation Sans", sans-serif;
    font-size: 10.5px;
    line-height: 12px;
    color: #555;
    padding-left: 1px;
}
.hcell-first {
    width: 16px;
    border-left: 0;
}
.ruler-mark-h {
    position: absolute;
    left: 550px;
    bottom: 0;
    border-left: 3px solid transparent;
    border-right: 3px solid transparent;
    border-top: 4px solid #333;
}
.cms-btn {
    display: flex;
    align-items: center;
    justify-content: center;
    background: #f0eeec;
}
.cms-btn i {
    width: 10px;
    height: 10px;
    border: 1px solid #aaa;
    border-radius: 2px;
}
.vruler {
    position: relative;
    overflow: hidden;
    border-right: 1px solid #666;
}
.vcell {
    width: 13px;
    height: 67.6px;
    border-top: 1px solid #777;
    background:
        repeating-linear-gradient(180deg, #666 0 1px, transparent 1px 6.76px) 100% 5.8px/3px 100% no-repeat;
    font-family: "Liberation Sans", sans-serif;
    font-size: 11.5px;
    line-height: 10px;
    color: #555;
    padding: 3px 0 0 4px;
}
.vcell span {
    display: block;
    width: 7px;
    word-break: break-all;
}
.vcell-first {
    height: 8.6px;
    border-top: 0;
}
.vcell-last {
    height: 22px;
    padding-top: 0;
}
.ruler-mark-v {
    position: absolute;
    right: 0;
    top: 415px;
    border-top: 3px solid transparent;
    border-bottom: 3px solid transparent;
    border-left: 4px solid #333;
}
.canvas {
    background: #fff;
    overflow: hidden;
}
.canvas svg {
    display: block;
}
.vscroll {
    background: #cfcecd;
    padding: 120px 5px 4px;
}
.vscroll i {
    display: block;
    height: 100%;
    background: #7f7f7f;
    border-radius: 3px;
}
.hscroll-spacer {
    background: #f6f5f4;
    border-right: 1px solid #666;
}
.hscroll {
    background: #cfcecd;
    padding: 2px 8px 4px 3px;
}
.hscroll i {
    display: block;
    height: 100%;
    background: #7f7f7f;
    border-radius: 3px;
}
.scroll-corner {
    background: #e6e5e4;
}

/* dock */
.dock {
    width: 348px;
    flex: none;
    background: #fff;
    position: relative;
}
.dock-head {
    height: 26px;
    display: flex;
    align-items: center;
    position: relative;
    font-size: 13.7px;
}
.dock-head .ic-dock {
    margin-left: 1px;
}
.dock-btn {
    position: absolute;
    top: 5px;
    width: 9px;
    height: 9px;
    border: 1px solid #999;
    border-radius: 2px;
    font-style: normal;
    font-size: 8px;
    line-height: 7px;
    text-align: center;
    color: #555;
}
.dock-btn-a { left: 302px; }
.dock-btn-b { left: 329px; }
.notebook {
    margin: 1px 4px 0;
    border: 1px solid #d8d6d3;
    padding-bottom: 4px;
}
.tabs {
    height: 29px;
    background: #dedbd8;
    position: relative;
    display: flex;
    font-size: 13.6px;
}
.tab {
    position: absolute;
    top: 0;
    height: 29px;
    line-height: 28px;
    white-space: nowrap;
    display: flex;
    align-items: center;
    gap: 3px;
    color: #444;
}
.tab-fill { left: 5px; width: 77px; padding-left: 9px; }
.tab-paint { left: 97px; }
.tab-style { left: 207px; }
.tab.active {
    border-bottom: 3px solid #3584e4;
}
.tab-swatch {
    width: 12px;
    height: 13px;
    border: 1px solid #888;
    background: #f0efee;
}
.tab-swatch.blue {
    border-color: #c8d6e8;
    background: linear-gradient(135deg, #aac4e4, #f2f5fa);
}
.ic-tab {
    width: 13px;
    height: 13px;
}
.paint-row {
    display: flex;
    gap: 1px;
    padding: 0 6px;
    margin-top: 6px;
}
.paint {
    width: 26px;
    height: 26px;
    display: flex;
    align-items: center;
    justify-content: center;
    border-radius: 4px;
}
.paint.on {
    background: #d3cfcb;
}
.paint-q {
    font-family: "DejaVu Sans", sans-serif;
    font-weight: 700;
    font-size: 15px;
    color: #111;
}
.paint-rule {
    margin-left: auto;
}
.flat-title {
    margin: 5px 6px 0;
    height: 20px;
    line-height: 20px;
    font-size: 13px;
    font-weight: 700;
}
.modes {
    display: grid;
    grid-template-columns: repeat(6, 1fr);
    gap: 2px;
    margin: 3px 6px 0;
    height: 25px;
}
.modes span {
    display: flex;
    align-items: center;
    justify-content: center;
    background: #f2f0ee;
    border: 1px solid #e0dedb;
    border-radius: 4px;
    color: #444;
}
.modes span.on {
    background: #d3cfcb;
}
.sliders {
    margin-top: 3px;
    display: flex;
    flex-direction: column;
    gap: 2px;
}
.slider-row {
    display: flex;
    align-items: center;
    height: 25px;
    padding-left: 12px;
}
.slider-row label {
    width: 29px;
    color: #555;
}
.slider {
    width: 226px;
    height: 25px;
}
.s-r { background: linear-gradient(90deg, #000, #f00); }
.s-g { background: linear-gradient(90deg, #f00, #ff0); }
.s-b { background: linear-gradient(90deg, #f00, #f0f); }
.s-a {
    background:
        linear-gradient(90deg, rgba(255, 0, 0, 0), #f00),
        repeating-conic-gradient(#6f6f6f 0 25%, #a8a8a8 0 50%) 0 0/12px 12px;
}
.spin-color {
    width: 53px;
    height: 25px;
    margin-left: 6px;
}
.spin-color .val {
    line-height: 23px;
    padding-left: 2px;
}
.spin-color b {
    line-height: 23px;
}
.rgba-row {
    display: flex;
    align-items: center;
    margin-top: 47px;
    height: 24px;
    padding: 0 6px;
    gap: 2px;
}
.ic-drop {
    width: 16px;
    height: 16px;
    margin-left: 7px;
}
.rgba-row label {
    margin-left: auto;
    margin-right: 8px;
    color: #555;
}
.rgba-input {
    width: 79px;
    height: 24px;
    border: 1px solid #dcdad7;
    border-radius: 4px;
    padding-left: 6px;
    line-height: 22px;
    color: #222;
    font-family: "Liberation Sans", sans-serif;
}
.blend-row {
    display: flex;
    align-items: center;
    justify-content: flex-end;
    height: 40px;
    padding: 6px 11px 7px 0;
    border-bottom: 1px solid #eeedec;
}
.blend-row label {
    margin-right: 15px;
    color: #555;
}
.combo {
    width: 84px;
    height: 27px;
    display: flex;
    align-items: center;
    justify-content: space-between;
    padding: 0 9px;
    background: #f0eeec;
    border: 1px solid #dedcd9;
    border-radius: 4px;
}
.bars {
    padding: 7px 0 0 4px;
    display: flex;
    flex-direction: column;
    gap: 1px;
}
.bar-row {
    display: flex;
    align-items: center;
    height: 23px;
}
.bar {
    width: 275px;
    height: 23px;
    padding-left: 2px;
    line-height: 24px;
    background: #dedbd8;
    border-left: 1px solid #3584e4;
    color: #333;
}
.bar.active {
    background: #3584e4;
    color: #fff;
}
.bar-val {
    width: 43px;
    padding-left: 3px;
    font-family: "DejaVu Sans", sans-serif;
    font-size: 13px;
    color: #111;
}
.expander {
    height: 25px;
    margin: 0 1px 1px;
    display: flex;
    align-items: center;
    padding-left: 6px;
    background: linear-gradient(#fdfdfd, #f1f0ef);
    border-bottom: 1px solid #dcdad8;
    position: relative;
}
.expander span {
    margin-left: 1px;
}
.bars + .expander {
    margin-top: 5px;
}
.expander.active {
    background: #d6d2ce;
    border-radius: 0 0 3px 3px;
}
.chev {
    position: absolute;
    right: 9px;
    top: 10px;
    width: 7px;
    height: 7px;
    border-left: 2px solid #333;
    border-top: 2px solid #333;
    transform: rotate(45deg);
}

/* right bars */
.cmdbar {
    width: 32px;
    flex: none;
    padding-top: 3px;
    border-left: 1px solid #ecebea;
}
.cmd {
    height: 26px;
    display: flex;
    align-items: center;
    justify-content: center;
}
.cmd .ic, .snap .ic {
    width: 17px;
    height: 17px;
}
.cmdbar hr {
    margin: 5px 3px;
    border-color: #e8e6e4;
}
.snapbar hr {
    margin: 5.25px 3px;
    border-color: #e8e6e4;
}
.snapbar {
    width: 34px;
    flex: none;
    padding-top: 3px;
}
.snap {
    height: 26px;
    margin: 0 4px;
    display: flex;
    align-items: center;
    justify-content: center;
    border-radius: 4px;
}
.snap.on {
    background: #d3cfcb;
}

/* palette */
.palette {
    position: relative;
    height: 16px;
    display: flex;
    background: #f6f5f4;
}
.swatch-none {
    width: 14.3px;
    flex: none;
    background: #fff;
}
.swatch-none svg {
    display: block;
    width: 14px;
    height: 16px;
}
.palette i.sw {
    flex: none;
    width: 14.26px;
    height: 16px;
}
.palette-arrow {
    position: absolute;
    left: 1424px;
    top: 9px;
    border-top: 4px solid transparent;
    border-bottom: 4px solid transparent;
    border-right: 5px solid #222;
}
.palette-scroll {
    width: 1412px;
    height: 9px;
    background: #c9c9c8;
    padding: 3px 0 2px 2px;
}
.palette-scroll i {
    display: block;
    width: 319px;
    height: 100%;
    background: #7f7f7f;
    border-radius: 3px;
}

/* status bar */
.statusbar {
    height: 35px;
    display: flex;
    align-items: stretch;
    overflow: hidden;
    color: #4a4a4a;
    position: relative;
}
.fillstroke {
    width: 94px;
    flex: none;
    padding-left: 2px;
}
.fs-row {
    height: 18px;
    display: flex;
    align-items: center;
}
.fs-row-b {
    height: 17px;
}
.fs-label {
    width: 43px;
    font-size: 13px;
    flex: none;
}
.fs-swatch {
    width: 24px;
    height: 18px;
    margin-top: 2px;
    background: #f00;
    border-radius: 3px;
}
.fs-row em {
    font-size: 13px;
    width: 20px;
    flex: none;
}
.fs-width {
    font-family: "DejaVu Sans", sans-serif;
    font-size: 12.5px;
}
.opacity-label {
    width: 26px;
    flex: none;
    line-height: 37px;
    font-family: "DejaVu Sans", sans-serif;
    font-size: 14px;
}
.spin-opacity {
    width: 52px;
    height: 33px;
    margin-top: 2px;
    border-radius: 3px 3px 0 0;
    border-bottom: 0;
}
.statusbar .spin .val {
    line-height: 31px;
    padding-left: 2px;
}
.statusbar .spin b {
    line-height: 31px;
}
.st-ic {
    width: 26px;
    flex: none;
    display: flex;
    align-items: center;
    justify-content: center;
}
.st-ic .ic {
    width: 16px;
    height: 16px;
}
.st-eye {
    margin-left: 5px;
}
.layer {
    width: 67px;
    flex: none;
    margin: 2px 2px 0 2px;
    display: flex;
    align-items: center;
    justify-content: center;
    gap: 3px;
    background: #efedeb;
    border: 1px solid #e4e2df;
    border-bottom: 0;
    border-radius: 3px 3px 0 0;
    font-size: 12px;
    color: #222;
}
.message {
    width: 765px;
    flex: none;
    line-height: 37px;
    font-size: 13.4px;
    white-space: nowrap;
}
.message b {
    font-family: "DejaVu Sans", sans-serif;
    font-size: 13px;
    color: #333;
    margin-right: 10px;
}
.pos {
    width: 90px;
    flex: none;
    padding-left: 8px;
    border-left: 1px solid #eee;
    font-family: "DejaVu Sans", sans-serif;
    font-size: 13px;
    line-height: 17px;
    padding-top: 2px;
}
.pos div {
    display: flex;
    justify-content: space-between;
}
.z-label {
    width: 36px;
    flex: none;
    padding-left: 8px;
    line-height: 37px;
    font-family: "DejaVu Sans", sans-serif;
    font-size: 13px;
}
.spin-zoom, .spin-rot {
    height: 33px;
    margin-top: 2px;
    border-bottom: 0;
    border-radius: 3px 3px 0 0;
}
.spin-zoom { width: 87px; }
.spin-rot { width: 95px; }
.statusbar .spin-zoom .val { padding-left: 12px; }
.statusbar .spin-rot .val { padding-left: 15px; }
.spin-zoom b, .spin-rot b {
    width: 16px;
}
.rot-label {
    width: 58px;
    flex: none;
    padding-left: 9px;
    line-height: 37px;
    font-size: 13px;
}
.bottom-edge {
    height: 2px;
    background: #2a2a2a;
}
.watermark {
    position: absolute;
    left: 1093px;
    top: 718px;
    font-size: 40px;
    line-height: 58px;
    font-weight: 500;
    letter-spacing: 1px;
    word-spacing: 12px;
    white-space: nowrap;
    color: rgba(255, 255, 255, 0.88);
    text-shadow: 2px 3px 1px rgba(80, 80, 80, 0.55);
}
```
FILE: palette.js
```js
// inkscape default palette, left to right
var colors = [
    "#000000","#1a1a1a","#333333","#4d4d4d","#666666","#808080","#999999","#b3b3b3","#cccccc","#e6e6e6","#ececec","#f2f2f2","#f9f9f9","#ffffff",
    "#800000","#ff0000","#808000","#ffff00","#008000","#00ff00","#008080","#00ffff","#000080","#0000ff","#800080","#ff00ff",
    "#2b0000","#550000","#800000","#aa0000","#d40000","#ff0000","#ff2a2a","#ff5555","#ff8080","#ffaaaa","#ffd5d5",
    "#280b0b","#501616","#782121","#a02c2c","#c83737","#d35f5f","#de8787","#e9afaf","#f4d7d7",
    "#241c1c","#483737","#6c5353","#916f6f","#ac9393","#c8b7b7","#e3dbdb",
    "#2b1100","#552200","#803300","#aa4400","#d45500","#ff6600","#ff7f2a","#ff9955","#ffb380","#ffccaa","#ffe6d5",
    "#28170b","#502d16","#784421","#a05a2c","#c87137","#d38d5f","#deaa87","#e9c6af","#f4e3d7",
    "#241f1c","#483e37","#6c5d53","#917c6f","#ac9d93","#c8beb7","#e3dedb",
    "#2b2200","#554400","#806600","#aa8800","#d4aa00","#ffcc00","#ffd42a","#ffdd55","#ffe680","#ffeeaa","#fff6d5",
    "#28220b","#504416","#786721","#a0892c","#c8ab37","#d3bc5f","#dec887"
];
var palette = document.getElementById("palette");
var arrow = palette.querySelector(".palette-arrow");
colors.forEach(function (c) {
    var sw = document.createElement("i");
    sw.className = "sw";
    sw.style.background = c;
    palette.insertBefore(sw, arrow);
});
```
